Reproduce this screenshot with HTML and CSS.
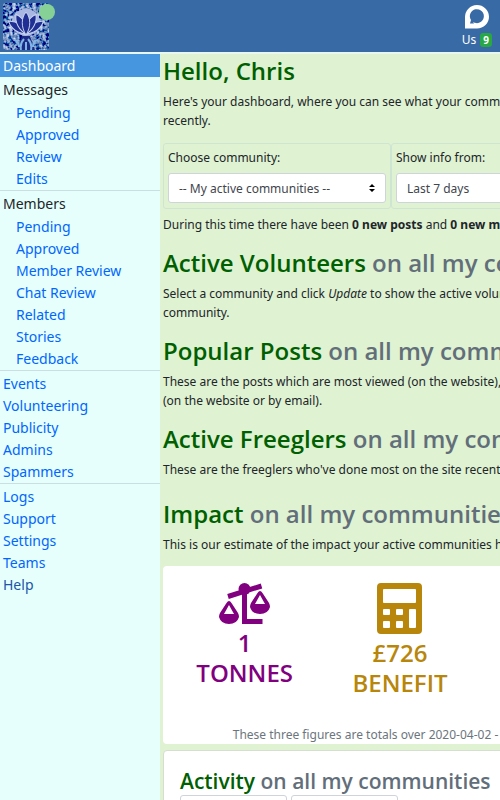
FILE: index.html
```html
<!DOCTYPE html>
<html lang="en">
<head>
  <meta charset="UTF-8">
  <meta name="viewport" content="width=device-width, initial-scale=1.0">
  <title>ModTools</title>
  <link rel="stylesheet" href="styles.css">
</head>
<body>
  <header class="navbar">
    <a href="#" class="logo" aria-label="Home">
      <svg width="46" height="47" viewBox="0 0 46 47">
        <defs>
          <filter id="speckle" x="0" y="0" width="100%" height="100%">
            <feTurbulence type="fractalNoise" baseFrequency="0.3" numOctaves="2" seed="4"/>
            <feColorMatrix values="1.6 0 0 0 -0.66  1.6 0 0 0 -0.56  1.4 0 0 0 -0.2  0 0 0 0 1"/>
          </filter>
          <clipPath id="rounded"><rect width="46" height="47" rx="3"/></clipPath>
          <path id="petal" d="M23 32C18 24 18 15 23 9C28 15 28 24 23 32Z"/>
        </defs>
        <g clip-path="url(#rounded)">
          <rect width="46" height="47" filter="url(#speckle)"/>
          <path d="M23 5C14 7 8 13 9 21C9 28 15 32 23 33C31 32 37 28 37 21C38 13 32 7 23 5Z" fill="#a9b8e2"/>
          <g fill="#202f93" stroke="#c9d5f0" stroke-width="1">
            <use href="#petal" transform="rotate(-56 23 30)"/>
            <use href="#petal" transform="rotate(56 23 30)"/>
            <use href="#petal" transform="rotate(-28 23 30)"/>
            <use href="#petal" transform="rotate(28 23 30)"/>
            <use href="#petal"/>
          </g>
          <path d="M14 47L19 33H27L32 47Z" fill="#1c2b86"/>
          <path d="M18 47C17 42 18 39 21 36M28 47C29 42 28 39 25 36M23 39V47M11 37Q16 38 16 44M35 37Q30 38 30 44" fill="none" stroke="#7fb4e6" stroke-width="2"/>
        </g>
      </svg>
      <span class="status"></span>
    </a>
    <a href="#" class="us">
      <svg width="24" height="24" viewBox="0 0 24 24">
        <path fill="#fff" fill-rule="evenodd" d="M0 23.500V12A12 11.700 0 1 1 12 23.500ZM5 18.500H9L8 17A7 7 0 1 0 6 15Z"/>
      </svg>
      <span class="us-label">Us <span class="badge">9</span></span>
    </a>
  </header>

  <div class="page">
    <nav class="sidebar">
      <a href="#" class="current">Dashboard</a>
      <div class="group">
        <span class="title">Messages</span>
        <a href="#" class="sub">Pending</a>
        <a href="#" class="sub">Approved</a>
        <a href="#" class="sub">Review</a>
        <a href="#" class="sub">Edits</a>
      </div>
      <div class="group">
        <span class="title">Members</span>
        <a href="#" class="sub">Pending</a>
        <a href="#" class="sub">Approved</a>
        <a href="#" class="sub">Member Review</a>
        <a href="#" class="sub">Chat Review</a>
        <a href="#" class="sub">Related</a>
        <a href="#" class="sub">Stories</a>
        <a href="#" class="sub">Feedback</a>
      </div>
      <div class="group links">
        <a href="#">Events</a>
        <a href="#">Volunteering</a>
        <a href="#">Publicity</a>
        <a href="#">Admins</a>
        <a href="#">Spammers</a>
      </div>
      <div class="group links">
        <a href="#">Logs</a>
        <a href="#">Support</a>
        <a href="#">Settings</a>
        <a href="#">Teams</a>
        <a href="#" class="help">Help</a>
      </div>
    </nav>

    <main>
      <div class="content">
        <section>
          <h1>Hello, Chris</h1>
          <p>Here's your dashboard, where you can see what your communities have been doing recently.</p>
        </section>

        <form class="filters">
          <div class="filter">
            <label for="community">Choose community:</label>
            <select id="community"><option>-- My active communities --</option></select>
          </div>
          <div class="filter">
            <label for="period">Show info from:</label>
            <select id="period"><option>Last 7 days</option></select>
          </div>
        </form>
        <p class="summary">During this time there have been <b>0 new posts</b> and <b>0 new members</b>.</p>

        <section>
          <h2>Active Volunteers <span class="muted">on all my communities</span></h2>
          <p>Select a community and click <i>Update</i> to show the active volunteers for that community.</p>
        </section>
        <section>
          <h2>Popular Posts <span class="muted">on all my communities</span></h2>
          <p>These are the posts which are most viewed (on the website), or most replied to (on&nbsp;the website or by email).</p>
        </section>
        <section class="freeglers">
          <h2>Active Freeglers <span class="muted">on all my communities</span></h2>
          <p>These are the freeglers who've done most on the site recently.</p>
        </section>
        <section class="estimate">
          <h2>Impact <span class="muted">on all my communities</span></h2>
          <p>This is our estimate of the impact your active communities have had.</p>
        </section>

        <div class="card impact">
          <div class="figures">
            <div class="figure tonnes">
              <svg width="52" height="42" viewBox="0 0 52 42">
                <g fill="none" stroke="currentColor" stroke-width="5">
                  <path d="M9 13.500L42.500 3"/>
                  <path d="M25.500 6V38.500H43.500"/>
                </g>
                <circle cx="25.500" cy="6" r="6" fill="currentColor"/>
                <path fill="currentColor" fill-rule="evenodd" d="M0 34Q0 32 1 30L7.500 20Q10 16 12.500 20L19 30Q20 32 20 34Q18 41 10 41Q2 41 0 34ZM5 31H15L10 22Z"/>
                <path fill="currentColor" fill-rule="evenodd" d="M31 24Q31 22 32 20L38.500 10Q41 6 43.500 10L50 20Q51 22 51 24Q49 31 41 31Q33 31 31 24ZM36 21H46L41 12Z"/>
              </svg>
              <span>1</span>
              <span>TONNES</span>
            </div>
            <div class="figure benefit">
              <svg width="45" height="52" viewBox="0 0 45 52">
                <path fill="currentColor" fill-rule="evenodd" d="M4 0H41Q45 0 45 4V47Q45 51 41 51H4Q0 51 0 47V4Q0 0 4 0Z
                  M7 6Q6 6 6 7V19Q6 20 7 20H38Q39 20 39 19V7Q39 6 38 6Z
                  M7 26Q6 26 6 27V31Q6 32 7 32H12Q13 32 13 31V27Q13 26 12 26Z
                  M20 26Q19 26 19 27V31Q19 32 20 32H25Q26 32 26 31V27Q26 26 25 26Z
                  M33 26Q32 26 32 27V44Q32 45 33 45H38Q39 45 39 44V27Q39 26 38 26Z
                  M7 38Q6 38 6 39V44Q6 45 7 45H12Q13 45 13 44V39Q13 38 12 38Z
                  M20 38Q19 38 19 39V44Q19 45 20 45H25Q26 45 26 44V39Q26 38 25 38Z"/>
              </svg>
              <span>£726</span>
              <span>BENEFIT</span>
            </div>
            <div class="figure"></div>
          </div>
          <p class="note">These three figures are totals over 2020-04-02 - 2020-05-02.</p>
        </div>

        <div class="card activity">
          <h3>Activity <span class="muted">on all my communities</span></h3>
          <div class="dates">
            <input type="text" aria-label="From">
            <input type="text" aria-label="To">
          </div>
        </div>
      </div>
    </main>
  </div>
</body>
</html>
```
FILE: styles.css
```css
* {
  box-sizing: border-box;
}
body {
  margin: 0;
  height: 100vh;
  display: flex;
  flex-direction: column;
  overflow: hidden;
  font-family: "Noto Sans", "Open Sans", sans-serif;
  font-size: 12px;
  line-height: 19px;
  color: #212529;
}
a {
  text-decoration: none;
}
svg {
  display: block;
}
h1, h2, h3, p {
  margin: 0;
}

/* Top bar */
.navbar {
  flex: none;
  height: 54px;
  padding: 3px 8px 0 3px;
  display: flex;
  justify-content: space-between;
  background: #386aa5;
  border-bottom: 2px solid #e8f7f0;
}
.logo {
  position: relative;
}
.status {
  position: absolute;
  top: 1px;
  right: -6px;
  width: 16px;
  height: 16px;
  border-radius: 50%;
  background: #85d196;
}
.us {
  display: flex;
  flex-direction: column;
  align-items: center;
  padding-top: 2px;
  color: #fff;
}
.us-label {
  display: flex;
  align-items: center;
  gap: 4px;
  padding-top: 3px;
  line-height: 16px;
}
.badge {
  padding: 0 3px;
  border-radius: 3px;
  background: #28a745;
  font-size: 10px;
  font-weight: 700;
  line-height: 14px;
}

.page {
  flex: 1;
  min-height: 0;
  display: flex;
}

/* Left menu */
.sidebar {
  flex: none;
  width: 160px;
  background: #e6fffc;
  font-size: 14px;
  line-height: 22px;
}
.sidebar a, .title {
  display: block;
  padding-left: 3px;
  color: #0066ff;
}
.sidebar .title {
  color: #212529;
  line-height: 25px;
}
.sidebar .sub {
  padding-left: 16px;
}
.sidebar .current {
  line-height: 23px;
  background: #4695df;
  color: #fff;
}
.sidebar .help {
  color: #2056a8;
}
.group + .group {
  border-top: 1px solid #c9dfe2;
}
.links {
  padding-top: 2px;
}

/* Dashboard */
main {
  flex: 1;
  min-width: 0;
  overflow: hidden;
  padding: 3px;
  background: #dff2d2;
}
.content {
  min-width: 474px;
}
section {
  margin-bottom: 15px;
}
h1, h2 {
  margin-bottom: 7px;
  font-family: "Open Sans", "Noto Sans", sans-serif;
  font-size: 24px;
  font-weight: 600;
  line-height: 28px;
  color: #005f00;
}
.muted {
  color: #626e79;
}
.filters {
  display: flex;
  margin: -2px 0 6px;
}
.filter {
  flex: 1;
  height: 66px;
  padding: 4px;
  border: 1px solid #cfe5d3;
  border-radius: 3px;
}
.filter:first-child {
  flex: none;
  width: 228px;
}
label {
  display: block;
  margin-bottom: 6px;
}
select {
  appearance: none;
  display: block;
  width: 100%;
  height: 30px;
  padding: 0 10px;
  border: 1px solid #ced4da;
  border-radius: 3px;
  color: #3f464d;
  font-family: inherit;
  font-size: 12px;
  background: #fff url("data:image/svg+xml,%3Csvg xmlns='http://www.w3.org/2000/svg' viewBox='0 0 6 8'%3E%3Cpath d='M0 3L3 0L6 3ZM0 5L3 8L6 5Z'/%3E%3C/svg%3E") no-repeat right 10px center / 6px 8px;
}
.summary {
  margin-bottom: 15px;
}
.freeglers {
  margin-bottom: 21px;
}
.estimate {
  margin-bottom: 12px;
}

.card {
  border-radius: 4px;
  background: #fff;
}
.impact {
  height: 178px;
  padding-top: 17px;
  display: flex;
  flex-direction: column;
  justify-content: space-between;
  text-align: center;
}
.figures {
  display: flex;
  padding: 0 4px;
}
.figure {
  flex: 1;
  display: flex;
  flex-direction: column;
  align-items: center;
  font-family: "Open Sans", "Noto Sans", sans-serif;
  font-size: 24px;
  font-weight: 600;
  line-height: 30px;
}
.figure svg {
  margin-bottom: 3px;
}
.tonnes {
  color: #800080;
}
.benefit {
  color: #b8860b;
}
.note {
  color: #6c757d;
}
.activity {
  margin-top: 6px;
  padding: 17px 16px;
  border: 1px solid #d5dfd0;
}
h3 {
  font-family: "Open Sans", "Noto Sans", sans-serif;
  font-size: 21px;
  font-weight: 600;
  line-height: 27px;
  color: #005f00;
}
.dates {
  display: flex;
  gap: 4px;
}
.dates input {
  width: 107px;
  height: 30px;
  border: 1px solid #ced4da;
  border-radius: 3px;
}
```
